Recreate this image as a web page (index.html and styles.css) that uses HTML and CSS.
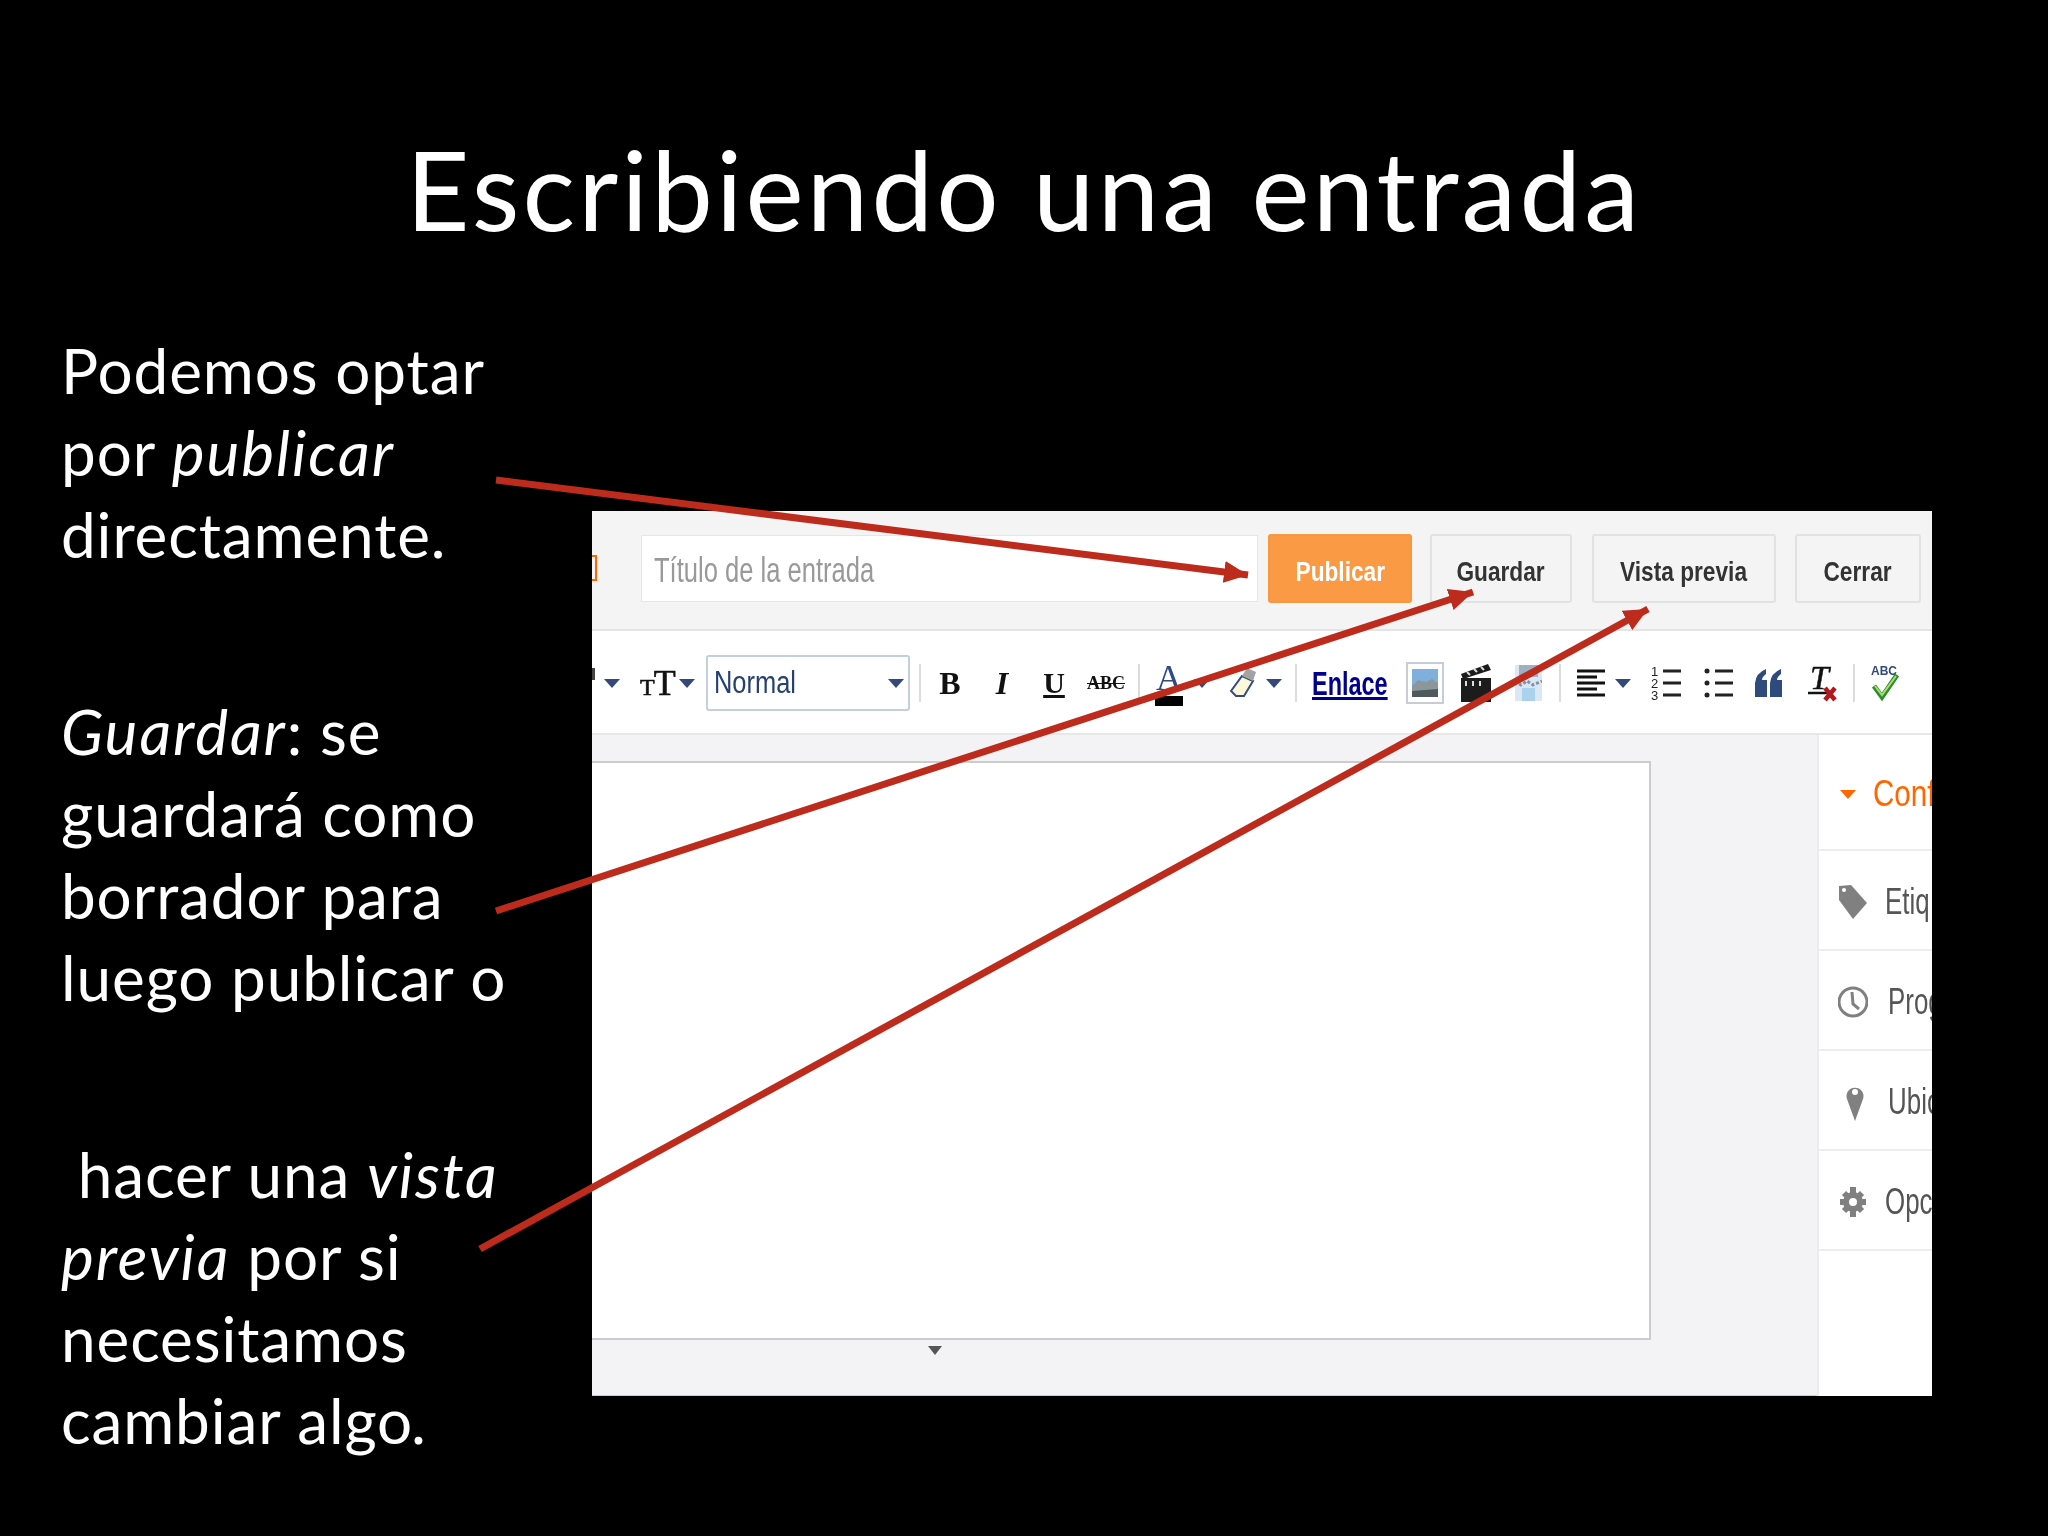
FILE: index.html
```html
<!DOCTYPE html>
<html lang="en">
<head>
    <meta charset="UTF-8">
    <meta name="viewport" content="width=device-width, initial-scale=1.0">
    <title>Escribiendo una entrada</title>
    <link rel="stylesheet" href="styles.css">
</head>
<body>
    <div class="slide">
        <h1 class="slide-title">Escribiendo una entrada</h1>

        <div class="content">
            <div class="notes">
                <p>Podemos optar<br>por <em>publicar</em><br>directamente.</p>
                <p><em>Guardar</em>: se<br>guardará como<br>borrador para<br>luego publicar o</p>
                <p>&nbsp;hacer una <em>vista</em><br><em>previa</em> por si<br>necesitamos<br>cambiar algo<em>.</em></p>
            </div>

            <div class="shot">
                <!-- Top bar of the editor -->
                <div class="topbar">
                    <span class="blog-name"></span>
                    <div class="title-input"><span>Título de la entrada</span></div>
                    <div class="btn btn-publish"><span>Publicar</span></div>
                    <div class="btn btn-save"><span>Guardar</span></div>
                    <div class="btn btn-preview"><span>Vista previa</span></div>
                    <div class="btn btn-close"><span>Cerrar</span></div>
                </div>

                <!-- Format toolbar -->
                <div class="toolbar">
                    <i class="tb-clip"></i>
                    <i class="caret"></i>
                    <span class="tb-size"><small>T</small>T</span>
                    <i class="caret"></i>
                    <div class="format-select"><span>Normal</span><i class="caret"></i></div>
                    <i class="sep tb-sep1"></i>
                    <span class="tb-cell tb-bold">B</span>
                    <span class="tb-cell tb-italic">I</span>
                    <span class="tb-cell tb-under">U</span>
                    <span class="tb-cell tb-strike">ABC</span>
                    <i class="sep tb-sep2"></i>
                    <span class="tb-color">A</span>
                    <i class="caret"></i>
                    <svg class="tb-eraser" width="28" height="32" viewBox="0 0 28 32">
                        <path d="M2 24 L13 9 L24 14 L15 29 L7 29 Z" fill="#fdf9d8" stroke="#2f4a86" stroke-width="2"/>
                        <path d="M13 9 L18 1 L27 5 L24 14 Z" fill="#a3a3a3"/>
                    </svg>
                    <i class="caret"></i>
                    <i class="sep tb-sep3"></i>
                    <span class="tb-link">Enlace</span>
                    <div class="tb-image">
                        <svg width="26" height="28" viewBox="0 0 26 28">
                            <rect width="26" height="28" fill="#7fb0dc"/>
                            <path d="M0 17 L6 11 L14 13 L20 10 L26 14 L26 28 L0 28 Z" fill="#8c979c"/>
                            <path d="M0 22 L26 20 L26 28 L0 28 Z" fill="#4f5a5e"/>
                        </svg>
                    </div>
                    <svg class="tb-video" width="30" height="38" viewBox="0 0 30 38">
                        <rect x="0" y="14" width="30" height="24" fill="#1c1c1c"/>
                        <path d="M0 10 L27 0 L30 6 L2 15 Z" fill="#1c1c1c"/>
                        <path d="M6 8 L9 11 M13 5 L16 8 M20 3 L23 6 M5 17 L5 22 M12 17 L12 22 M19 17 L19 22" stroke="#ddd" stroke-width="2"/>
                    </svg>
                    <svg class="tb-pic" width="27" height="36" viewBox="0 0 27 36">
                        <rect x="0" y="0" width="27" height="36" fill="#dbe8f4"/>
                        <rect x="4" y="0" width="19" height="12" fill="#9fb0c2"/>
                        <path d="M0 16 L6 20 L12 16 L18 20 L27 16" fill="none" stroke="#7f93a8" stroke-width="3" stroke-dasharray="3 2"/>
                        <rect x="7" y="23" width="13" height="13" fill="#a9d2ee"/>
                    </svg>
                    <i class="sep tb-sep4"></i>
                    <svg class="tb-align" width="29" height="28" viewBox="0 0 29 28" stroke="#111" stroke-width="3">
                        <path d="M0 2 H28 M0 8 H20 M0 14 H28 M0 20 H20 M0 26 H28"/>
                    </svg>
                    <i class="caret"></i>
                    <svg class="tb-ol" width="30" height="36" viewBox="0 0 30 36">
                        <text x="0" y="11" class="tiny-num">1</text>
                        <text x="0" y="23" class="tiny-num">2</text>
                        <text x="0" y="35" class="tiny-num">3</text>
                        <path d="M12 6 H30 M12 18 H30 M12 30 H30" stroke="#222" stroke-width="3"/>
                    </svg>
                    <svg class="tb-ul" width="29" height="36" viewBox="0 0 29 36">
                        <circle cx="3" cy="6" r="2.5" fill="#222"/>
                        <circle cx="3" cy="18" r="2.5" fill="#222"/>
                        <circle cx="3" cy="30" r="2.5" fill="#222"/>
                        <path d="M11 6 H29 M11 18 H29 M11 30 H29" stroke="#222" stroke-width="3"/>
                    </svg>
                    <svg class="tb-quote" width="27" height="28" viewBox="0 0 27 28" fill="#2f4a7c">
                        <path d="M0 14 Q1 4 11 0 L11 5 Q7 8 7 11 L12 11 L12 28 L0 28 Z"/>
                        <path d="M15 14 Q16 4 26 0 L26 5 Q22 8 22 11 L27 11 L27 28 L15 28 Z"/>
                    </svg>
                    <svg class="tb-clear" width="29" height="38" viewBox="0 0 29 38">
                        <text x="2" y="25" class="clear-t">T</text>
                        <path d="M0 29 H20" stroke="#111" stroke-width="2.5"/>
                        <path d="M17 24 L27 36 M27 24 L17 36" stroke="#b3161c" stroke-width="4.5"/>
                    </svg>
                    <i class="sep tb-sep5"></i>
                    <svg class="tb-spell" width="29" height="38" viewBox="0 0 29 38">
                        <text x="1" y="11" class="spell-t">ABC</text>
                        <path d="M4 22 L12 33 L27 11" fill="none" stroke="#2e8b2e" stroke-width="5"/>
                        <path d="M5 22 L12 31 L26 12" fill="none" stroke="#a8e070" stroke-width="2"/>
                    </svg>
                </div>

                <div class="work">
                    <div class="editor">
                        <div class="page"></div>
                        <i class="grabber"></i>
                    </div>

                    <!-- Settings column, cut by the right edge of the capture -->
                    <div class="sidebar">
                        <div class="side-row side-open">
                            <i class="open-caret"></i>
                            <span class="side-label">Conf</span>
                        </div>
                        <div class="side-row side-tag">
                            <svg class="side-icon" width="30" height="36" viewBox="0 0 30 36" fill="#808080">
                                <path d="M1 2 L13 1 L29 19 L15 35 L1 16 Z"/>
                                <circle cx="6" cy="6" r="2" fill="#fff"/>
                            </svg>
                            <span class="side-label">Etiq</span>
                        </div>
                        <div class="side-row side-clock">
                            <svg class="side-icon" width="30" height="36" viewBox="0 0 30 36" fill="none" stroke="#808080">
                                <circle cx="15" cy="18" r="14" stroke-width="3"/>
                                <path d="M14 8 L15 20 L21 25" stroke-width="3"/>
                            </svg>
                            <span class="side-label">Prog</span>
                        </div>
                        <div class="side-row side-pin">
                            <svg class="side-icon" width="30" height="38" viewBox="0 0 30 38" fill="#808080">
                                <path d="M15 38 L7 16 A8.5 8.5 0 1 1 23 16 Z"/>
                                <circle cx="15" cy="9" r="3" fill="#fff"/>
                            </svg>
                            <span class="side-label">Ubic</span>
                        </div>
                        <div class="side-row side-gear">
                            <svg class="side-icon" width="30" height="36" viewBox="0 0 30 36" fill="none" stroke="#808080">
                                <circle cx="15" cy="18" r="7" stroke-width="6"/>
                                <path d="M15 3 V9 M15 27 V33 M2 18 H8 M22 18 H28 M6 9 L10 13 M20 23 L24 27 M24 9 L20 13 M10 23 L6 27" stroke-width="6"/>
                            </svg>
                            <span class="side-label">Opc</span>
                        </div>
                    </div>
                </div>
            </div>
        </div>

        <!-- Red arrows drawn over the capture -->
        <svg class="arrows" width="2048" height="1536" viewBox="0 0 2048 1536">
            <defs>
                <marker id="head" markerUnits="userSpaceOnUse" markerWidth="26" markerHeight="22" refX="24" refY="11" orient="auto">
                    <path d="M0 0 L24 11 L0 22 Z" fill="#bd2b1c"/>
                </marker>
            </defs>
            <line x1="496" y1="480" x2="1248" y2="575" marker-end="url(#head)"/>
            <line x1="496" y1="911" x2="1473" y2="592" marker-end="url(#head)"/>
            <line x1="480" y1="1249" x2="1648" y2="609" marker-end="url(#head)"/>
        </svg>
    </div>
</body>
</html>
```

FILE: styles.css
```css
body {
    margin: 0;
    background-color: #000;
}
.slide {
    position: relative;
    width: 2048px;
    height: 1536px;
    overflow: hidden;
    background-color: #000;
    color: #fff;
    font-family: 'Lato', 'Open Sans', sans-serif;
}
.slide-title {
    margin: 0;
    padding-top: 122px;
    height: 207px;
    line-height: 132px;
    font-size: 110px;
    font-weight: 400;
    letter-spacing: 3.2px;
    text-align: center;
}
.content {
    display: flex;
    align-items: flex-start;
}
.notes {
    width: 531px;
    padding-left: 61px;
    flex-shrink: 0;
    font-size: 62px;
    line-height: 82px;
    letter-spacing: 0.9px;
}
.notes p {
    margin: 0 0 115px;
    white-space: nowrap;
}
.notes em {
    letter-spacing: 2px;
}
.arrows {
    position: absolute;
    top: 0;
    left: 0;
}
.arrows line {
    stroke: #bd2b1c;
    stroke-width: 7;
}

/* Captured blogger editor */
.shot {
    width: 1340px;
    height: 885px;
    margin-top: 182px;
    overflow: hidden;
    background-color: #fff;
    font-family: 'Liberation Sans', sans-serif;
    filter: blur(0.5px);
}
.topbar {
    display: flex;
    align-items: center;
    height: 114px;
    padding-bottom: 4px;
    background-color: #f4f4f4;
    border-bottom: 2px solid #e4e4e4;
}
.blog-name {
    width: 5px;
    height: 26px;
    margin-right: 44px;
    border: 2px solid #f60;
    border-left: 0;
    box-sizing: border-box;
}
.title-input {
    width: 617px;
    height: 67px;
    display: flex;
    align-items: center;
    box-sizing: border-box;
    padding: 4px 0 0 12px;
    background-color: #fff;
    border: 1px solid #e6e6e6;
    font-size: 35px;
    color: #999;
}
.title-input span {
    transform: scaleX(0.73);
    transform-origin: left center;
    white-space: nowrap;
}
.btn {
    height: 69px;
    box-sizing: border-box;
    display: flex;
    align-items: center;
    justify-content: center;
    padding-top: 8px;
    border: 2px solid #e2e2e2;
    border-radius: 3px;
    background-color: #f4f4f4;
    font-size: 27px;
    font-weight: bold;
    color: #333;
    white-space: nowrap;
}
.btn span {
    transform: scaleX(0.84);
}
.btn-publish {
    width: 144px;
    margin-left: 10px;
    border-color: #f59842;
    background-color: #fb9a45;
    color: #fff;
}
.btn-save {
    width: 142px;
    margin-left: 18px;
}
.btn-preview {
    width: 184px;
    margin-left: 20px;
}
.btn-close {
    width: 126px;
    margin-left: 19px;
}

/* Toolbar cells keep the spacing of the original icon strip */
.toolbar {
    display: flex;
    align-items: center;
    height: 100px;
    padding-top: 2px;
    background-color: #fff;
    border-bottom: 2px solid #e8e8e8;
    white-space: nowrap;
}
.toolbar > * {
    flex-shrink: 0;
}
.tb-clip {
    display: block;
    width: 3px;
    height: 12px;
    margin-bottom: 18px;
    background-color: #444;
}
.caret {
    display: block;
    width: 0;
    height: 0;
    margin-left: 9px;
    border-left: 8px solid transparent;
    border-right: 8px solid transparent;
    border-top: 9px solid #34497a;
}
.sep {
    display: block;
    width: 2px;
    height: 38px;
    background-color: #dcdcdc;
}
.tb-sep1 { margin-left: 9px; }
.tb-sep2 { margin-left: 6px; }
.tb-sep3 { margin-left: 13px; }
.tb-sep4 { margin-left: 17px; }
.tb-sep5 { margin-left: 16px; }
.tb-size {
    width: 30px;
    margin-left: 20px;
    padding-top: 4px;
    font-family: 'Liberation Serif', serif;
    font-size: 36px;
    color: #111;
    line-height: 36px;
    -webkit-text-stroke: 0.6px #111;
}
.tb-size small {
    font-size: 24px;
    margin-right: -1px;
}
.format-select {
    width: 204px;
    height: 56px;
    margin-left: 11px;
    box-sizing: border-box;
    display: flex;
    align-items: center;
    justify-content: space-between;
    padding: 0 4px 0 6px;
    border: 2px solid #c3cfe0;
    border-radius: 3px;
    font-size: 31px;
    color: #25416f;
}
.format-select span {
    transform: scaleX(0.82);
    transform-origin: left center;
}
.tb-cell {
    width: 52px;
    text-align: center;
    font-family: 'Liberation Serif', serif;
    color: #111;
}
.tb-bold {
    margin-left: 3px;
    font-size: 32px;
    font-weight: bold;
}
.tb-italic {
    font-size: 32px;
    font-style: italic;
    font-weight: bold;
}
.tb-under {
    font-size: 30px;
    font-weight: bold;
    text-decoration: underline;
}
.tb-strike {
    font-size: 18px;
    font-weight: bold;
    text-decoration: line-through;
}
.tb-color {
    width: 28px;
    margin-left: 15px;
    margin-right: 2px;
    font-family: 'Liberation Serif', serif;
    font-size: 36px;
    line-height: 36px;
    text-align: center;
    color: #2f4a86;
    border-bottom: 10px solid #000;
}
.tb-eraser { margin-left: 19px; }
.tb-link {
    width: 76px;
    margin-left: 15px;
    font-size: 34px;
    font-weight: bold;
    color: #00008f;
    text-decoration: underline;
    transform: scaleX(0.69);
    transform-origin: left center;
}
.tb-image {
    width: 38px;
    height: 42px;
    margin-left: 18px;
    box-sizing: border-box;
    display: flex;
    align-items: center;
    justify-content: center;
    border: 2px solid #c8ccd6;
}
.tb-video { margin-left: 17px; }
.tb-pic { margin-left: 24px; }
.tb-align { margin-left: 16px; }
.tb-ol { margin-left: 20px; }
.tb-ul { margin-left: 23px; }
.tb-quote { margin-left: 22px; }
.tb-clear { margin-left: 26px; }
.tb-spell { margin-left: 15px; }
.tiny-num {
    font-size: 13px;
    font-family: 'Liberation Sans', sans-serif;
    fill: #222;
}
.clear-t {
    font-family: 'Liberation Serif', serif;
    font-size: 34px;
    font-style: italic;
    fill: #111;
    stroke: #111;
    stroke-width: 0.5;
}
.spell-t {
    font-family: 'Liberation Sans', sans-serif;
    font-size: 12px;
    font-weight: bold;
    fill: #34497a;
}

.work {
    display: flex;
    height: 661px;
}
.editor {
    flex: 1;
    display: flex;
    flex-direction: column;
    padding-top: 26px;
    background-color: #f3f2f5;
    border-bottom: 1px solid #ccc;
}
.page {
    width: 1059px;
    height: 579px;
    box-sizing: border-box;
    background-color: #fff;
    border-top: 2px solid #ccc;
    border-right: 2px solid #ccc;
    border-bottom: 2px solid #ccc;
}
.grabber {
    display: block;
    width: 0;
    height: 0;
    margin: 6px 0 0 336px;
    border-left: 7px solid transparent;
    border-right: 7px solid transparent;
    border-top: 9px solid #555;
}
.sidebar {
    width: 115px;
    flex-shrink: 0;
    box-sizing: border-box;
    background-color: #fff;
    border-left: 2px solid #ebebee;
}
.side-row {
    display: flex;
    align-items: center;
    height: 100px;
    box-sizing: border-box;
    padding: 4px 0 0 19px;
    border-bottom: 2px solid #eeeeee;
    white-space: nowrap;
}
.side-open {
    height: 116px;
}
.open-caret {
    display: block;
    width: 0;
    height: 0;
    margin: 0 17px 0 2px;
    border-left: 8px solid transparent;
    border-right: 8px solid transparent;
    border-top: 9px solid #f60;
}
.side-icon {
    margin-right: 17px;
    flex-shrink: 0;
}
.side-clock .side-icon {
    margin-right: 20px;
}
.side-pin .side-icon {
    margin-left: 2px;
    margin-right: 18px;
}
.side-label {
    font-size: 36px;
    color: #555;
    transform: scaleX(0.72);
    transform-origin: left center;
}
.side-open .side-label {
    color: #f60;
    transform: scaleX(0.82);
}
```
